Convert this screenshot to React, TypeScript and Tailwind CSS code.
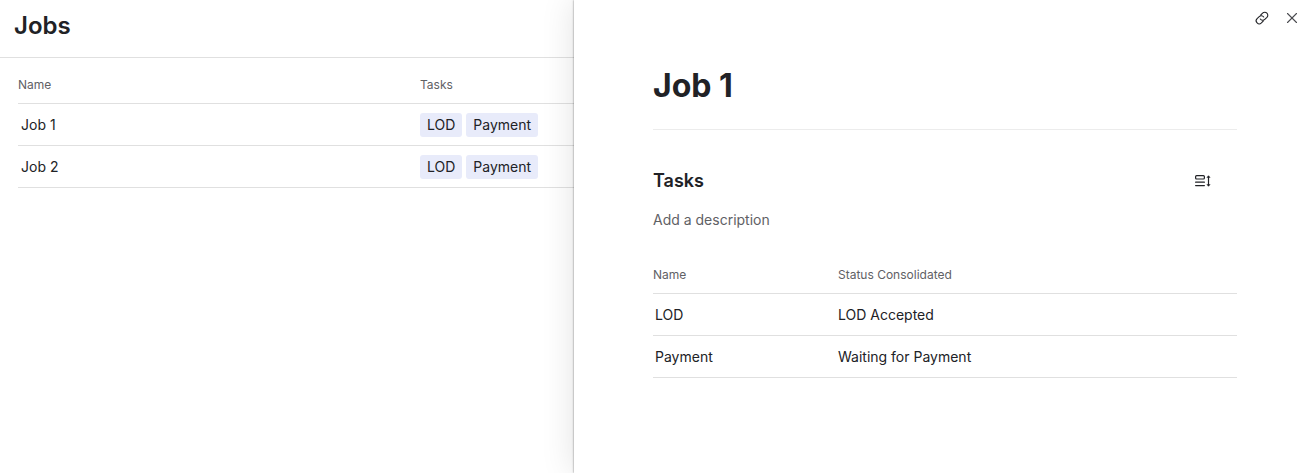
import { X } from "lucide-react"

interface Job {
    name: string
    tasks: string[]
}

interface Task {
    name: string
    status: string
}

const jobs: Job[] = [
    { name: "Job 1", tasks: ["LOD", "Payment"] },
    { name: "Job 2", tasks: ["LOD", "Payment"] },
]

const tasks: Task[] = [
    { name: "LOD", status: "LOD Accepted" },
    { name: "Payment", status: "Waiting for Payment" },
]

function LinkIcon() {
    return (
        <svg className="w-4 h-4" viewBox="0 0 16 16" fill="none" stroke="currentColor" strokeWidth="1.1" strokeLinecap="round">
            <path d="M6.6 5.2 8.6 3.100a3 3 0 0 1 4.300 4.300l-2.100 2a3 3 0 0 1-4.500-.4" />
            <path d="M9.400 10.800 7.400 12.900a3 3 0 0 1-4.300-4.300l2.100-2a3 3 0 0 1 4.500.4" />
        </svg>
    )
}

function RowHeightIcon() {
    return (
        <svg className="w-4 h-4" viewBox="0 0 16 16" fill="none" stroke="currentColor" strokeWidth="1.2" strokeLinecap="round">
            <rect x="0.6" y="2.700" width="8.800" height="3.300" rx="1" />
            <path d="M0.6 9.200h8.800M0.6 12.600h8.800M13.500 3.500v9" />
            <path d="M12.200 4.200 13.500 2.700l1.300 1.500zM12.200 11.800l1.300 1.500 1.300-1.500z" fill="currentColor" strokeWidth="0.6" />
        </svg>
    )
}

function TaskTag({ label }: { label: string }) {
    return (
        <span className="flex h-6 items-center rounded-[3px] bg-[#e8ebfa] px-[7px]">
            {label}
        </span>
    )
}

function JobsList() {
    return (
        <main className="min-w-0 overflow-hidden">
            <header className="flex h-[58px] border-b border-[#e0e0e0] px-3.5 pt-2.5">
                <h1 className="text-2xl leading-8 font-semibold">Jobs</h1>
            </header>
            <div className="pl-[18px]">
                <table className="w-full table-fixed border-separate border-spacing-0 text-left text-sm">
                    <thead>
                        <tr className="h-[46px] text-xs text-[#5f6165]">
                            <th className="w-[402px] border-b border-[#e0e0e0] pt-2 font-normal">Name</th>
                            <th className="border-b border-[#e0e0e0] pt-2 font-normal">Tasks</th>
                        </tr>
                    </thead>
                    <tbody>
                        {jobs.map((job) => (
                            <tr key={job.name} className="h-[42px]">
                                <td className="border-b border-[#e0e0e0] pl-[3px]">{job.name}</td>
                                <td className="border-b border-[#e0e0e0]">
                                    <div className="flex gap-1">
                                        {job.tasks.map((task) => (
                                            <TaskTag key={task} label={task} />
                                        ))}
                                    </div>
                                </td>
                            </tr>
                        ))}
                    </tbody>
                </table>
            </div>
        </main>
    )
}

function JobPanel() {
    return (
        <aside className="min-w-0 bg-white shadow-[0_0_2px_rgba(0,0,0,0.5),0_0_32px_rgba(0,0,0,0.12)]">
            <div className="flex h-9 items-center justify-end gap-[13px] pr-[10px]">
                <button type="button" aria-label="Copy link">
                    <LinkIcon />
                </button>
                <button type="button" aria-label="Close">
                    <X className="w-[18px] h-[18px] text-[#4a4b4f]" strokeWidth={1.5} />
                </button>
            </div>

            <div className="pl-[79px] pr-[74px]">
                <div className="border-b border-[#ececec] pt-7 pb-[21px]">
                    <h2 className="text-[32px] leading-11 font-bold">Job 1</h2>
                </div>

                <div className="mt-[37px] flex items-center justify-between pr-[26px]">
                    <h3 className="text-lg leading-7 font-semibold">Tasks</h3>
                    <button type="button" aria-label="Row height">
                        <RowHeightIcon />
                    </button>
                </div>
                <p className="mt-[15px] text-sm leading-5 text-[#5f6165]">Add a description</p>

                <table className="mt-[18px] w-full table-fixed border-separate border-spacing-0 text-left text-sm">
                    <thead>
                        <tr className="h-[46px] text-xs text-[#5f6165]">
                            <th className="w-[185px] border-b border-[#e0e0e0] pt-2 font-normal">Name</th>
                            <th className="border-b border-[#e0e0e0] pt-2 font-normal">Status Consolidated</th>
                        </tr>
                    </thead>
                    <tbody>
                        {tasks.map((task) => (
                            <tr key={task.name} className="h-[42px]">
                                <td className="border-b border-[#e0e0e0] pl-0.5">{task.name}</td>
                                <td className="border-b border-[#e0e0e0]">{task.status}</td>
                            </tr>
                        ))}
                    </tbody>
                </table>
            </div>
        </aside>
    )
}

export default function App() {
    return (
        <div className="grid min-h-screen grid-cols-[574fr_737fr] overflow-hidden bg-white font-['Inter',sans-serif] text-[#212226]">
            <JobsList />
            <JobPanel />
        </div>
    )
}
